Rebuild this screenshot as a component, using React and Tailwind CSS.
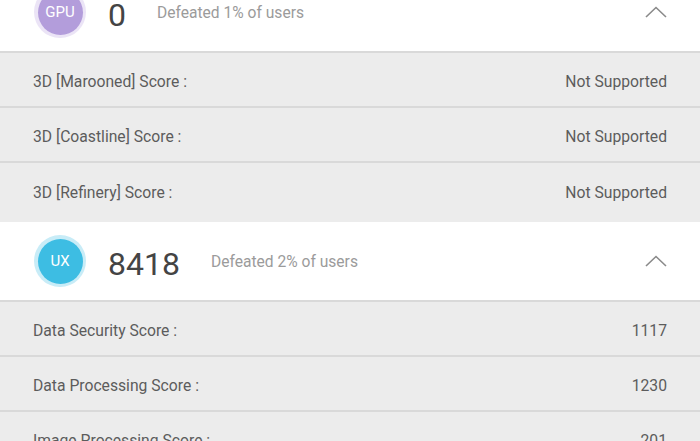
import React from "react";

function Chevron() {
  return (
    <svg width="22" height="12" viewBox="0 0 22 12" fill="none">
      <path d="M1 11L11 1.5L21 11" stroke="#8a8a8a" strokeWidth="1.6" />
    </svg>
  );
}

function Header({ label, score, pct, fill, halo }) {
  return (
    <div className="flex h-[80px] items-center border-b-2 border-[#d9d9d9] bg-white pl-[34px] pr-[33px]">
      <div className={`flex h-[52px] w-[52px] items-center justify-center rounded-full ${halo}`}>
        <div className={`flex h-[45px] w-[45px] items-center justify-center rounded-full ${fill} text-[15px] text-white`}>
          {label}
        </div>
      </div>
      <div className="ml-[22px] mt-[5px] text-[32px] leading-none text-[#444]">{score}</div>
      <div className="ml-[31px] mt-[3px] text-[15.6px] text-[#9b9b9b]">Defeated {pct} of users</div>
      <div className="ml-auto flex items-center">
        <Chevron />
      </div>
    </div>
  );
}

function Row({ name, value, last }) {
  return (
    <div
      className={`flex items-center justify-between bg-[#ececec] px-[33px] text-[15.7px] text-[#5c5c5c] ${
        last ? "h-[59px] pt-[1px]" : "h-[55px] border-b-2 border-[#d9d9d9] pt-[5px]"
      }`}
    >
      <span>{name}</span>
      <span>{value}</span>
    </div>
  );
}

export default function App() {
  return (
    <div className="h-[441px] w-[700px] overflow-hidden bg-[#ececec] font-['Roboto',sans-serif]">
      <div className="-mt-[27px]">
        <Header label="GPU" score="0" pct="1%" fill="bg-[#b39ddb]" halo="bg-[#ebe4f6]" />
        <Row name="3D [Marooned] Score :" value="Not Supported" />
        <Row name="3D [Coastline] Score :" value="Not Supported" />
        <Row name="3D [Refinery] Score :" value="Not Supported" last />
        <Header label="UX" score="8418" pct="2%" fill="bg-[#3dbde3]" halo="bg-[#c8ecf7]" />
        <Row name="Data Security Score :" value="1117" />
        <Row name="Data Processing Score :" value="1230" />
        <Row name="Image Processing Score :" value="201" />
      </div>
    </div>
  );
}
